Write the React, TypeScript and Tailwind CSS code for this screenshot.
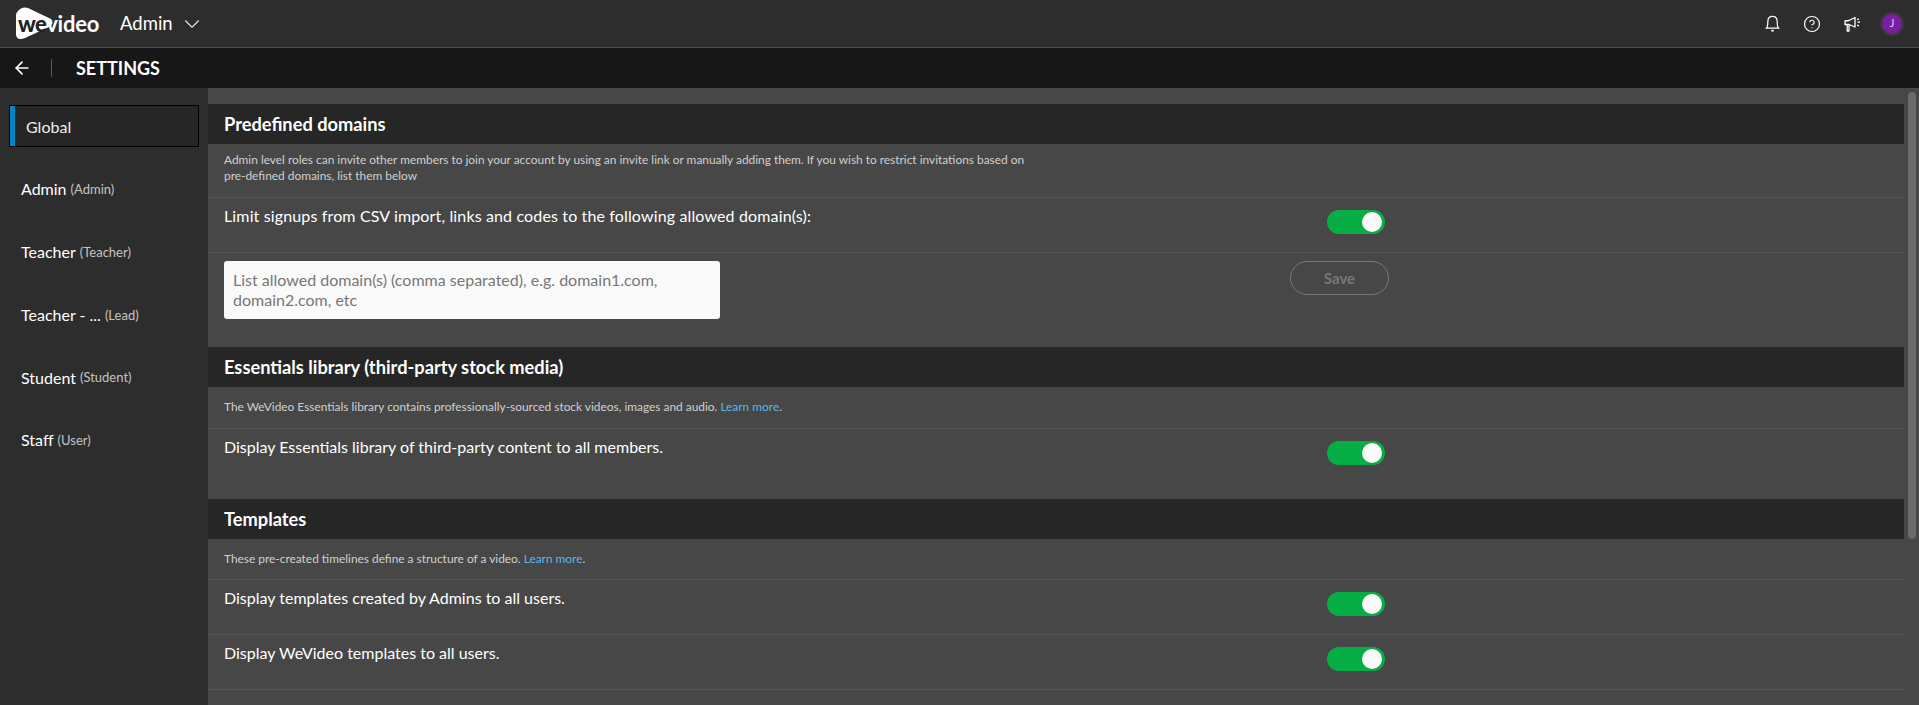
import { ArrowLeft, ChevronDown, CircleHelp } from "lucide-react";

function Toggle() {
  return (
    <div className="w-[58px] h-6 rounded-full bg-[#06ae45] flex items-center justify-end pr-[3px]">
      <div className="w-5 h-5 rounded-full bg-[#fafafa]" />
    </div>
  );
}

function Head({ children }: { children: string }) {
  return (
    <div className="h-10 bg-[#262626] flex items-center pl-[16px] pt-[1px] text-[18.25px] font-bold text-white">{children}</div>
  );
}

function Row({ label, labelClass = "" }: { label: string; labelClass?: string }) {
  return (
    <div className="h-[55px] border-t border-[#555] flex pl-[16px] pt-[6px]">
      <span className={"w-[1103px] shrink-0 text-[16px] leading-[24px] text-white " + labelClass}>{label}</span>
      <div className="mt-[6px]"><Toggle /></div>
    </div>
  );
}

function Role({ name, role }: { name: string; role: string }) {
  return (
    <div className="h-[62.75px] flex items-center pl-[21px] text-[16px] text-white">
      <span>{name}</span>
      <span className="ml-1 mt-[1px] text-[13px] text-[#c4c4c4]">({role})</span>
    </div>
  );
}

function IconSlot({ children }: { children: React.ReactNode }) {
  return <div className="w-10 h-10 flex items-center justify-center">{children}</div>;
}

export default function App() {
  return (
    <div className="w-[1919px] h-[705px] overflow-hidden flex flex-col bg-[#474747] font-['Lato','Noto_Sans',sans-serif]">
      <header className="h-[48px] shrink-0 bg-[#2d2d2d] border-b border-[#4a4a4a] flex items-center">
        <div className="ml-[16px] relative w-[84px] h-[33px] flex items-center">
          <svg width="38" height="33" viewBox="0 0 38 33" className="absolute left-0 top-0">
            <path d="M2 4 Q6 -1 12 1 L35 12 Q38 15 35 19 L9 31 Q1 34 0 28 L0 8 Q0 6 2 4 Z" fill="#fff" />
          </svg>
          <span className="relative text-[22px] font-black tracking-[-0.6px] text-[#222] ml-[2px]">we</span>
          <span className="relative text-[22px] font-bold tracking-[-0.2px] text-white">video</span>
        </div>
        <span className="ml-[20px] text-[18.5px] text-white">Admin</span>
        <ChevronDown className="ml-[6px] text-[#e5e5e5]" size={26} strokeWidth={1} />
        <div className="ml-auto flex items-center pr-[7px]">
          <IconSlot>
            <svg width="15" height="17" viewBox="0 0 16 18" fill="none" stroke="#fff" strokeWidth="1.3" strokeLinecap="round">
              <path d="M1.5 14 H14.5 C13 12.5 13 11.5 13 7 C13 3.8 11 1.5 8 1.5 C5 1.5 3 3.8 3 7 C3 11.5 3 12.5 1.5 14 Z" />
              <path d="M7.4 16.6 H8.6" strokeWidth="1.8" />
            </svg>
          </IconSlot>
          <IconSlot>
            <CircleHelp className="text-white" size={18} strokeWidth={1.6} />
          </IconSlot>
          <IconSlot>
            <svg width="17" height="16" viewBox="0 0 17 16" fill="none" stroke="#fff" strokeWidth="1.3" strokeLinejoin="round">
              <path d="M1 5 L5 4.5 L11 1.5 V11 L5 8.5 H1 Z" />
              <path d="M3.2 8.5 V15 H5 V8.5" />
              <path d="M13 3.5 L15 2.8 M13.5 6.2 H16 M13 9 L15 9.8" />
            </svg>
          </IconSlot>
          <IconSlot>
            <div className="w-5 h-5 rounded-full bg-[#7b1fa2] text-[#e0c8ec] text-[11px] flex items-center justify-center ring-2 ring-[#3a3a3a]">J</div>
          </IconSlot>
        </div>
      </header>
      <div className="h-[40px] shrink-0 bg-[#171717] flex items-center">
        <ArrowLeft className="ml-[12px] text-white" size={20} strokeWidth={2} />
        <div className="ml-[19px] w-px h-[18px] bg-[#5a5a5a]" />
        <span className="ml-[24px] text-[18px] font-bold text-white">SETTINGS</span>
      </div>
      <div className="flex flex-1 min-h-0">
        <aside className="w-[208px] shrink-0 bg-[#2d2d2d] pt-[17px]">
          <div className="ml-[9px] w-[190px] h-[42px] bg-[#262626] border border-black flex items-center">
            <div className="w-[5px] h-full bg-[#0284c7]" />
            <span className="ml-[11px] mt-[1px] text-[16px] text-[#eee]">Global</span>
          </div>
          <div className="mt-[11px]">
            <Role name="Admin" role="Admin" />
            <Role name="Teacher" role="Teacher" />
            <Role name="Teacher - ..." role="Lead" />
            <Role name="Student" role="Student" />
            <Role name="Staff" role="User" />
          </div>
        </aside>
        <main className="flex-1 flex overflow-hidden pt-[16px]">
          <div className="w-[1696px] shrink-0">
            <Head>Predefined domains</Head>
            <div className="h-[53px] pl-[16px] pt-[8px] text-[11.9px] leading-[16px] text-[#d0d0d0] w-[826px]">
              Admin level roles can invite other members to join your account by using an invite link or manually adding them. If you wish to restrict invitations based on pre-defined domains, list them below
            </div>
            <Row label="Limit signups from CSV import, links and codes to the following allowed domain(s):" labelClass="tracking-[0.14px]" />
            <div className="h-[95px] border-t border-[#555] flex pl-[16px] pt-[8px]">
              <div className="w-[496px] h-[58px] shrink-0 bg-[#fafafa] rounded-[3px] px-[9px] py-[9px] text-[16px] leading-[20px] text-[#777]">
                List allowed domain(s) (comma separated), e.g. domain1.com, domain2.com, etc
              </div>
              <div className="ml-[570px] w-[99px] h-[34px] rounded-full border border-[#777] flex items-center justify-center text-[15px] font-bold text-[#777]">Save</div>
            </div>
            <Head>Essentials library (third-party stock media)</Head>
            <div className="h-[41px] pl-[16px] pt-[12px] text-[11.9px] leading-[16px] text-[#d0d0d0]">
              The WeVideo Essentials library contains professionally-sourced stock videos, images and audio. <span className="text-[#5bb5e8]">Learn more</span>.
            </div>
            <Row label="Display Essentials library of third-party content to all members." />
            <div className="h-[16px]" />
            <Head>Templates</Head>
            <div className="h-[40px] pl-[16px] pt-[12px] text-[11.9px] leading-[16px] text-[#d0d0d0]">
              These pre-created timelines define a structure of a video. <span className="text-[#5bb5e8]">Learn more</span>.
            </div>
            <Row label="Display templates created by Admins to all users." />
            <Row label="Display WeVideo templates to all users." />
            <div className="border-t border-[#555]" />
          </div>
          <div className="ml-[4px] -mt-[12px] w-2 h-[447px] shrink-0 rounded-full bg-[#6a6a6a]" />
        </main>
      </div>
    </div>
  );
}
